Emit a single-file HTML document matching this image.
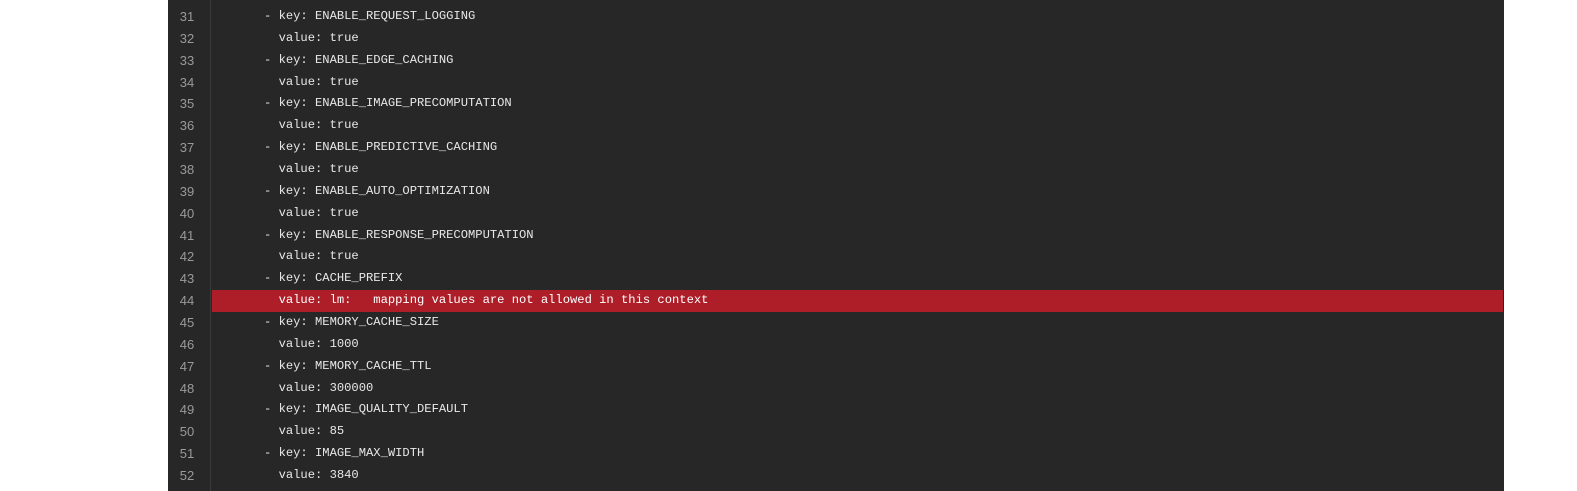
<!DOCTYPE html>
<html><head><style>
html,body{margin:0;padding:0;background:#fff;width:1577px;height:491px;overflow:hidden}
.ed{position:absolute;left:168px;top:0;width:1336px;height:491px;background:#272727}
.gut{position:absolute;left:0;top:0;width:42px;height:491px;border-right:1px solid #3a3a3a}
.ln{position:absolute;left:0;width:38px;text-align:center;font:13px "Liberation Sans",sans-serif;color:#9a9a9a;height:21.86px;line-height:21.86px}
.code{position:absolute;left:44px;width:1291px;box-sizing:border-box;height:21.86px;line-height:21.86px;font:12.15px "Liberation Mono",monospace;color:#e8e8e8;white-space:pre;padding-left:52px;padding-top:3px}
.err{background:#ad1e28;color:#fff}
</style></head><body>
<div class="ed"><div class="gut"></div>
<div class="ln" style="top:6px">31</div><div class="code" style="top:6px">- key: ENABLE_REQUEST_LOGGING</div>
<div class="ln" style="top:27.86px">32</div><div class="code" style="top:27.86px">  value: true</div>
<div class="ln" style="top:49.72px">33</div><div class="code" style="top:49.72px">- key: ENABLE_EDGE_CACHING</div>
<div class="ln" style="top:71.58px">34</div><div class="code" style="top:71.58px">  value: true</div>
<div class="ln" style="top:93.44px">35</div><div class="code" style="top:93.44px">- key: ENABLE_IMAGE_PRECOMPUTATION</div>
<div class="ln" style="top:115.3px">36</div><div class="code" style="top:115.3px">  value: true</div>
<div class="ln" style="top:137.16px">37</div><div class="code" style="top:137.16px">- key: ENABLE_PREDICTIVE_CACHING</div>
<div class="ln" style="top:159.02px">38</div><div class="code" style="top:159.02px">  value: true</div>
<div class="ln" style="top:180.88px">39</div><div class="code" style="top:180.88px">- key: ENABLE_AUTO_OPTIMIZATION</div>
<div class="ln" style="top:202.74px">40</div><div class="code" style="top:202.74px">  value: true</div>
<div class="ln" style="top:224.6px">41</div><div class="code" style="top:224.6px">- key: ENABLE_RESPONSE_PRECOMPUTATION</div>
<div class="ln" style="top:246.46px">42</div><div class="code" style="top:246.46px">  value: true</div>
<div class="ln" style="top:268.32px">43</div><div class="code" style="top:268.32px">- key: CACHE_PREFIX</div>
<div class="ln" style="top:290.18px">44</div><div class="code err" style="top:290.18px">  value: lm:   mapping values are not allowed in this context</div>
<div class="ln" style="top:312.04px">45</div><div class="code" style="top:312.04px">- key: MEMORY_CACHE_SIZE</div>
<div class="ln" style="top:333.9px">46</div><div class="code" style="top:333.9px">  value: 1000</div>
<div class="ln" style="top:355.76px">47</div><div class="code" style="top:355.76px">- key: MEMORY_CACHE_TTL</div>
<div class="ln" style="top:377.62px">48</div><div class="code" style="top:377.62px">  value: 300000</div>
<div class="ln" style="top:399.48px">49</div><div class="code" style="top:399.48px">- key: IMAGE_QUALITY_DEFAULT</div>
<div class="ln" style="top:421.34px">50</div><div class="code" style="top:421.34px">  value: 85</div>
<div class="ln" style="top:443.2px">51</div><div class="code" style="top:443.2px">- key: IMAGE_MAX_WIDTH</div>
<div class="ln" style="top:465.06px">52</div><div class="code" style="top:465.06px">  value: 3840</div>
</div>
</body></html>
